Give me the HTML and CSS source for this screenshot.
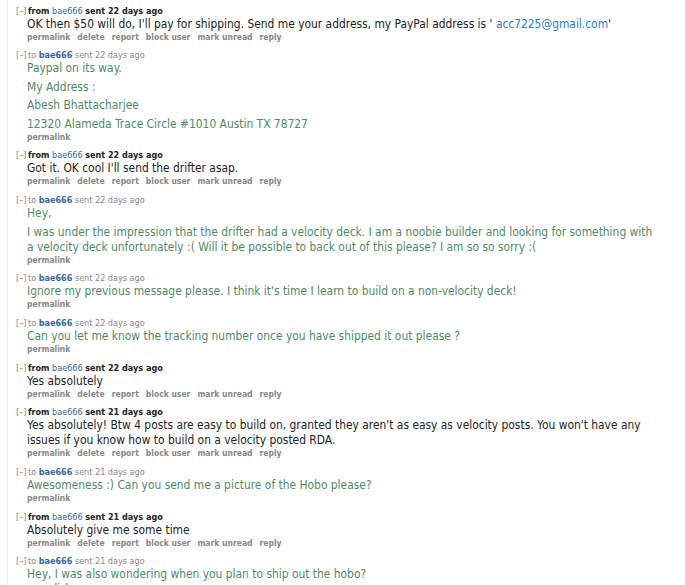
FILE: index.html
```html
<!DOCTYPE html>
<html lang="en">
<head>
<meta charset="utf-8">
<title>messages</title>
<link rel="stylesheet" href="styles.css">
</head>
<body>
<div class="thread">

  <div class="msg msg-from">
    <p class="tagline"><span class="expand">[–]</span> <span class="dir">from</span> <a class="author">bae666</a> <span class="date">sent 22 days ago</span></p>
    <div class="md"><p>OK then $50 will do, I'll pay for shipping. Send me your address, my PayPal address is ' <a class="link">acc7225@gmail.com</a>'</p></div>
    <ul class="buttons"><li>permalink</li><li>delete</li><li>report</li><li>block user</li><li>mark unread</li><li>reply</li></ul>
  </div>

  <div class="msg msg-to">
    <p class="tagline"><span class="expand">[–]</span> <span class="dir">to</span> <a class="author">bae666</a> <span class="date">sent 22 days ago</span></p>
    <div class="md">
      <p>Paypal on its way.</p>
      <p>My Address :</p>
      <p>Abesh Bhattacharjee</p>
      <p>12320 Alameda Trace Circle #1010 Austin TX 78727</p>
    </div>
    <ul class="buttons"><li>permalink</li></ul>
  </div>

  <div class="msg msg-from">
    <p class="tagline"><span class="expand">[–]</span> <span class="dir">from</span> <a class="author">bae666</a> <span class="date">sent 22 days ago</span></p>
    <div class="md"><p>Got it. OK cool I'll send the drifter asap.</p></div>
    <ul class="buttons"><li>permalink</li><li>delete</li><li>report</li><li>block user</li><li>mark unread</li><li>reply</li></ul>
  </div>

  <div class="msg msg-to">
    <p class="tagline"><span class="expand">[–]</span> <span class="dir">to</span> <a class="author">bae666</a> <span class="date">sent 22 days ago</span></p>
    <div class="md">
      <p>Hey,</p>
      <p>I was under the impression that the drifter had a velocity deck. I am a noobie builder and looking for something with a velocity deck unfortunately :( Will it be possible to back out of this please? I am so so sorry :(</p>
    </div>
    <ul class="buttons"><li>permalink</li></ul>
  </div>

  <div class="msg msg-to">
    <p class="tagline"><span class="expand">[–]</span> <span class="dir">to</span> <a class="author">bae666</a> <span class="date">sent 22 days ago</span></p>
    <div class="md"><p>Ignore my previous message please. I think it's time I learn to build on a non-velocity deck!</p></div>
    <ul class="buttons"><li>permalink</li></ul>
  </div>

  <div class="msg msg-to">
    <p class="tagline"><span class="expand">[–]</span> <span class="dir">to</span> <a class="author">bae666</a> <span class="date">sent 22 days ago</span></p>
    <div class="md"><p>Can you let me know the tracking number once you have shipped it out please ?</p></div>
    <ul class="buttons"><li>permalink</li></ul>
  </div>

  <div class="msg msg-from">
    <p class="tagline"><span class="expand">[–]</span> <span class="dir">from</span> <a class="author">bae666</a> <span class="date">sent 22 days ago</span></p>
    <div class="md"><p>Yes absolutely</p></div>
    <ul class="buttons"><li>permalink</li><li>delete</li><li>report</li><li>block user</li><li>mark unread</li><li>reply</li></ul>
  </div>

  <div class="msg msg-from">
    <p class="tagline"><span class="expand">[–]</span> <span class="dir">from</span> <a class="author">bae666</a> <span class="date">sent 21 days ago</span></p>
    <div class="md"><p>Yes absolutely! Btw 4 posts are easy to build on, granted they aren't as easy as velocity posts. You won't have any issues if you know how to build on a velocity posted RDA.</p></div>
    <ul class="buttons"><li>permalink</li><li>delete</li><li>report</li><li>block user</li><li>mark unread</li><li>reply</li></ul>
  </div>

  <div class="msg msg-to">
    <p class="tagline"><span class="expand">[–]</span> <span class="dir">to</span> <a class="author">bae666</a> <span class="date">sent 21 days ago</span></p>
    <div class="md"><p>Awesomeness :) Can you send me a picture of the Hobo please?</p></div>
    <ul class="buttons"><li>permalink</li></ul>
  </div>

  <div class="msg msg-from">
    <p class="tagline"><span class="expand">[–]</span> <span class="dir">from</span> <a class="author">bae666</a> <span class="date">sent 21 days ago</span></p>
    <div class="md"><p>Absolutely give me some time</p></div>
    <ul class="buttons"><li>permalink</li><li>delete</li><li>report</li><li>block user</li><li>mark unread</li><li>reply</li></ul>
  </div>

  <div class="msg msg-to">
    <p class="tagline"><span class="expand">[–]</span> <span class="dir">to</span> <a class="author">bae666</a> <span class="date">sent 21 days ago</span></p>
    <div class="md"><p>Hey, I was also wondering when you plan to ship out the hobo?</p></div>
    <ul class="buttons"><li>permalink</li></ul>
  </div>

</div>
</body>
</html>
```

FILE: styles.css
```css
html, body {
  margin: 0;
  padding: 0;
  background: #fff;
}

body {
  font-family: "DejaVu Sans Condensed", "DejaVu Sans", Verdana, sans-serif;
  font-stretch: semi-condensed;
  color: #222;
  height: 585px;
  overflow: hidden;
}

/* dotted guide running down the conversation */
.thread {
  margin-left: 7px;
  border-left: 1px dotted #ddd;
  padding-top: 5.5px;
  min-height: 100%;
  box-sizing: border-box;
}

.msg {
  padding-left: 8px;
  margin-bottom: 7.7px;
}

.tagline {
  margin: 0;
  font-size: 9px;
  line-height: 11px;
  color: #888;
  white-space: nowrap;
}

.expand {
  color: #888;
  margin-right: -1px;
}

.author {
  color: #369;
}

.msg-from .dir,
.msg-from .date {
  color: #222;
  font-weight: bold;
}

.msg-to .author {
  font-weight: bold;
}

.md {
  padding-left: 11px;
  max-width: 628px;
  font-size: 11.9px;
  line-height: 15px;
}

.md p {
  margin: 0 0 3.5px;
}

.md p:last-child {
  margin-bottom: 0;
}

.msg-to .md {
  color: #4f8a68;
}

.link {
  color: #2a7ad6;
}

.buttons {
  list-style: none;
  margin: 0;
  padding: 0 0 0 11px;
  display: flex;
  gap: 7px;
  font-size: 8.5px;
  line-height: 11px;
  font-weight: bold;
  color: #888;
}
```
